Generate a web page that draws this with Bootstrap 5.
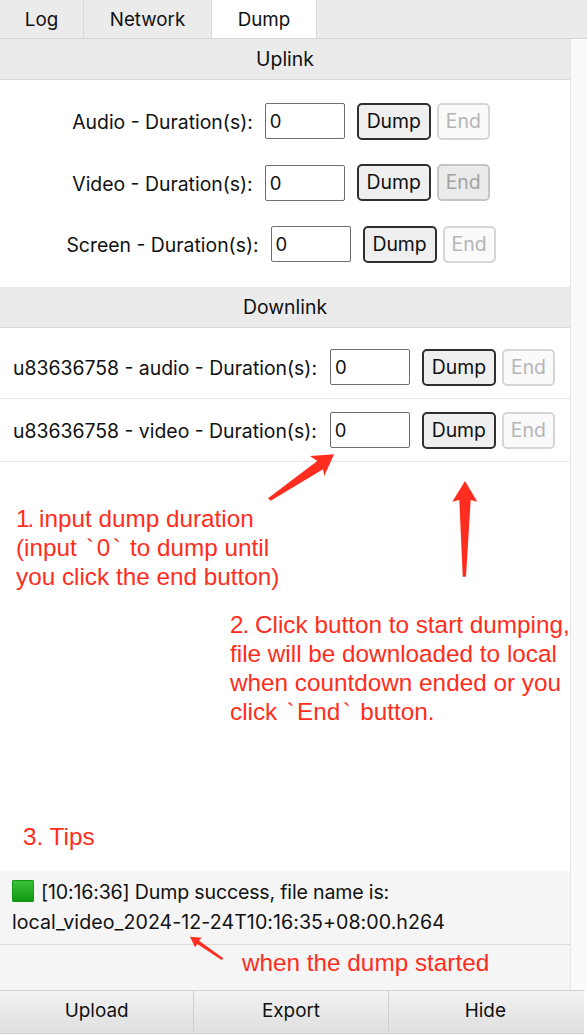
<!DOCTYPE html>
<html lang="en"><head><meta charset="utf-8"><title>Dump</title>
<link href="https://cdn.jsdelivr.net/npm/bootstrap@5.3.0/dist/css/bootstrap.min.css" rel="stylesheet">
<style>
html,body{height:100%;}
body{width:587px;height:1034px;overflow:hidden;font-family:"Inter","Liberation Sans",Arial,sans-serif;font-size:19.4px;color:#111;background:#fff;position:relative;display:flex;flex-direction:column;}
.tabbar{height:39px;background:#ebebeb;border-bottom:1px solid #d6d6d6;flex:none;font-size:18.8px;}
.tabitem{height:38px;line-height:40px;text-align:center;border-right:1px solid #d9d9d9;}
.tab-log{width:84px;}.tab-net{width:128px;}.tab-dump{width:105px;background:#fff;}
.mainpane{flex:1 1 auto;min-height:0;}
.scrolltrack{width:17px;background:#fafafa;border-left:1px solid #e6e6e6;flex:none;}
.content{flex:1 1 auto;min-width:0;}
.sechead{height:41px;line-height:40px;background:#ebebeb;border-bottom:1px solid #d9d9d9;text-align:center;}
.upwrap{height:207px;padding-top:23px;}
.uprow{height:36px;margin-bottom:25.5px;padding-right:8px;}
.rowlabel{padding-top:4px;}
.dur{width:80px;height:36px;border:1px solid #6e6e6e;border-radius:2px;padding:0 4px;font-size:18.5px;line-height:34px;margin:0 12px;background:#fff;}
.bdump,.bend{height:37px;border-radius:5px;font-size:19.4px;padding:0;line-height:33px;}
.bdump{width:74px;background:#efefef;border:2px solid #2f2f2f;color:#111;margin-right:6px;}
.bend{width:53px;background:#fafafa;border:2px solid #d6d6d6;color:#b5b5b5;}
.bend.dim{background:#ebebeb;border-color:#c4c4c4;color:#a3a3a3;}
.downlist{padding-top:8px;}
.downrow{height:63px;border-bottom:1px solid #e8e8e8;padding-left:13px;}
.downrow .dur{margin:0 12px 0 13px;}
.blank{height:409px;}
.tipsbox{background:#f5f5f5;flex:1 1 auto;}
.tipmsg{height:74px;border-bottom:1px solid #dcdcdc;padding:6px 12px 0;line-height:30px;white-space:nowrap;font-size:19.6px;}
.tipfirst{letter-spacing:-.18px;}
.tipsecond{letter-spacing:.05px;}
.swatch{display:inline-block;width:22px;height:22px;background:linear-gradient(#3cc03c,#109a14);border:1px solid #129a16;vertical-align:-3px;margin-right:7px;border-radius:1px;}
.footbar{height:44px;width:584px;padding-right:2px;flex:none;background:linear-gradient(#f2f2f2,#dfdfdf);border-top:1px solid #d4d4d4;border-bottom:1px solid #cfcfcf;font-size:18.9px;}
.footbtn{flex:1 1 0;text-align:center;line-height:40px;height:41px;border-right:1px solid #cfcfcf;}
.footbtn:last-child{border-right:0;}
.note{position:absolute;color:#ff2d20;font-family:"Liberation Sans",Arial,sans-serif;font-size:24.3px;line-height:29px;white-space:nowrap;}
.tick{padding:0 2.5px;}
.tight1{letter-spacing:-2px;}
.tight2{letter-spacing:-1px;}
.arrows{position:absolute;left:0;top:0;pointer-events:none;}
</style></head>
<body>
<div class="tabbar d-flex">
  <div class="tabitem tab-log">Log</div>
  <div class="tabitem tab-net">Network</div>
  <div class="tabitem tab-dump">Dump</div>
</div>
<div class="mainpane d-flex">
  <div class="content d-flex flex-column">
    <div class="sechead">Uplink</div>
    <div class="upwrap">
      <div class="uprow d-flex justify-content-center align-items-center"><span class="rowlabel">Audio - Duration(s):</span><div class="dur">0</div><button class="btn bdump">Dump</button><button class="btn bend">End</button></div>
      <div class="uprow d-flex justify-content-center align-items-center"><span class="rowlabel">Video - Duration(s):</span><div class="dur">0</div><button class="btn bdump">Dump</button><button class="btn bend dim">End</button></div>
      <div class="uprow d-flex justify-content-center align-items-center"><span class="rowlabel">Screen - Duration(s):</span><div class="dur">0</div><button class="btn bdump">Dump</button><button class="btn bend">End</button></div>
    </div>
    <div class="sechead">Downlink</div>
    <div class="downlist">
    <div class="downrow d-flex align-items-center"><span class="rowlabel">u83636758 - audio - Duration(s):</span><div class="dur">0</div><button class="btn bdump">Dump</button><button class="btn bend">End</button></div>
    <div class="downrow d-flex align-items-center"><span class="rowlabel">u83636758 - video - Duration(s):</span><div class="dur">0</div><button class="btn bdump">Dump</button><button class="btn bend">End</button></div>
    </div>
    <div class="blank"></div>
    <div class="tipsbox">
      <div class="tipmsg"><span class="swatch"></span><span class="tipfirst">[10:16:36] Dump success, file name is:</span><br><span class="tipsecond">local_video_2024-12-24T10:16:35+08:00.h264</span></div>
    </div>
  </div>
  <div class="scrolltrack"></div>
</div>
<div class="footbar d-flex">
  <div class="footbtn">Upload</div>
  <div class="footbtn">Export</div>
  <div class="footbtn">Hide</div>
</div>
<div class="note" style="left:16px;top:504px"><span class="tight1">1.</span> input dump duration<br>(input <span class="tick">`</span>0<span class="tick">`</span> to dump until<br>you click the end button)</div>
<div class="note" style="left:230px;top:610px"><span class="tight2">2.</span> Click button to start dumping,<br>file will be downloaded to local<br>when countdown ended or you<br>click <span class="tick">`</span>End<span class="tick">`</span> button.</div>
<div class="note" style="left:23px;top:822px">3. Tips</div>
<div class="note" style="left:242px;top:948px">when the dump started</div>
<svg class="arrows" width="587" height="1034" viewBox="0 0 587 1034" fill="#ff2d20">
  <path d="M334 454.3 L324.3 476 L323 469.3 L270.7 500.7 L268 498.3 L317.3 461 L310 456 Z"/>
  <path d="M465 481 L477.3 501.7 L470.7 500 L466 576.7 L462.7 576.7 L459.3 500 L452.3 501.7 Z"/>
  <path d="M190 936.7 L201.7 937.7 L199 940.7 L223.3 958.3 L221.7 960 L197.3 944 L195 947.3 Z"/>
</svg>
<script src="https://cdn.jsdelivr.net/npm/bootstrap@5.3.0/dist/js/bootstrap.bundle.min.js"></script>
</body></html>
